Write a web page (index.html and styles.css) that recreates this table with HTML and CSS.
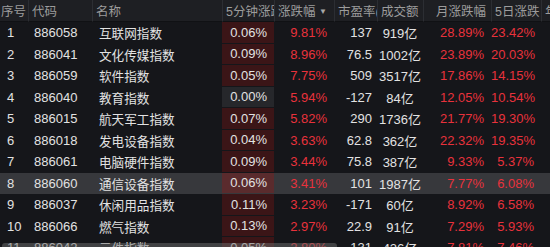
FILE: index.html
```html
<!DOCTYPE html>
<html>
<head>
<meta charset="utf-8">
<link rel="stylesheet" href="styles.css">
</head>
<body>
<div class="board">
<table class="quotes">
  <colgroup>
    <col class="c-no"><col class="c-code"><col class="c-name"><col class="c-min5">
    <col class="c-chg"><col class="c-pe"><col class="c-amt"><col class="c-month">
    <col class="c-day5"><col class="c-year">
  </colgroup>
  <thead>
    <tr>
      <th>序号</th><th>代码</th><th>名称</th><th>5分钟涨跌</th>
      <th>涨跌幅 <span class="sort">&#9660;</span></th><th>市盈率(</th><th>成交额</th>
      <th class="r">月涨跌幅</th><th>5日涨跌</th><th>年</th>
    </tr>
  </thead>
  <tbody id="rows"></tbody>
</table>
<div class="hscroll"></div>
</div>

<script type="text/javascript">
	const data = [
		["1", "886058", "互联网指数", "0.06%", "9.81%", "137", "919亿", "28.89%", "23.42%"],
		["2", "886041", "文化传媒指数", "0.09%", "8.96%", "76.5", "1002亿", "23.89%", "20.03%"],
		["3", "886059", "软件指数", "0.05%", "7.75%", "509", "3517亿", "17.86%", "14.15%"],
		["4", "886040", "教育指数", "0.00%", "5.94%", "-127", "84亿", "12.05%", "10.54%"],
		["5", "886015", "航天军工指数", "0.07%", "5.82%", "290", "1736亿", "21.77%", "19.30%"],
		["6", "886018", "发电设备指数", "0.04%", "3.63%", "62.8", "362亿", "22.32%", "19.35%"],
		["7", "886061", "电脑硬件指数", "0.09%", "3.44%", "75.8", "387亿", "9.33%", "5.37%"],
		["8", "886060", "通信设备指数", "0.06%", "3.41%", "101", "1987亿", "7.77%", "6.08%"],
		["9", "886037", "休闲用品指数", "0.11%", "3.23%", "-171", "60亿", "8.92%", "6.58%"],
		["10", "886066", "燃气指数", "0.13%", "2.97%", "22.9", "91亿", "7.29%", "5.93%"],
		["11", "886042", "元件指数", "0.05%", "2.80%", "131", "426亿", "7.81%", "7.46%"]
	]

	function cell(row, text, cls) {
		const td = row.insertCell()
		td.textContent = text
		if (cls) td.className = cls
		return td
	}

	const tbody = document.getElementById("rows")
	for (const d of data) {
		const row = tbody.insertRow()
		if (d[0] == "8") row.classList.add("selected")

		cell(row, d[0], "no")
		cell(row, d[1], "code")
		cell(row, d[2], "name")
		// flat 5-min change gets a grey cell instead of red
		cell(row, d[3], d[3] == "0.00%" ? "min5 flat" : "min5")
		cell(row, d[4], "num up")
		cell(row, d[5], "num pe")
		cell(row, d[6], "amt")
		cell(row, d[7], "num up")
		cell(row, d[8], "num up")
		cell(row, "", "")
	}
</script>
</body>
</html>
```

FILE: styles.css
```css
html, body {
	margin: 0;
	background: #15161a;
	overflow: hidden;
}

body {
	font-family: "Liberation Sans", "Noto Sans CJK SC", sans-serif;
	font-size: 13px;
	color: #e2e2e2;
}

.board {
	position: relative;
	width: 550px;
	height: 247px;
	overflow: hidden;
}

.quotes {
	table-layout: fixed;
	border-collapse: separate;
	border-spacing: 0;
	width: 580px;
}

.c-no { width: 28px; }
.c-code { width: 64px; }
.c-name { width: 130px; }
.c-min5 { width: 52px; }
.c-chg { width: 60px; }
.c-pe { width: 43px; }
.c-amt { width: 46px; }
.c-month { width: 68px; }
.c-day5 { width: 50px; }
.c-year { width: 39px; }

.quotes th {
	height: 22px;
	padding: 0 0 1px 3px;
	background: #1e1f23;
	color: #9c9c9c;
	font-size: 12.5px;
	font-weight: normal;
	text-align: left;
	white-space: nowrap;
	overflow: hidden;
	border-left: 1px solid #2c2e33;
	border-bottom: 1px solid #101114;
	box-sizing: border-box;
}

.quotes th:first-child {
	border-left: none;
	padding-left: 1px;
}

.quotes th.r {
	text-align: right;
	padding-right: 5px;
}

.sort {
	font-size: 8px;
	vertical-align: 2px;
	color: #a8a8a8;
}

.quotes td {
	height: 20.5px;
	padding: 0;
	white-space: nowrap;
	overflow: hidden;
}

.quotes tr.selected {
	background: #37383c;
}

td.no { padding-left: 7px; }
td.code { padding-left: 6px; }
td.name { padding-left: 7px; font-size: 12.6px; }

td.min5 {
	text-align: right;
	padding-right: 7px;
	background: #3b1517;
	background-clip: padding-box;
	border-bottom: 1px solid transparent;
}

td.min5.flat { background: #26272b; background-clip: padding-box; }
tr.selected td.min5 { background: #5a2b2d; background-clip: padding-box; }

td.num {
	text-align: right;
	padding-right: 7px;
}

td.pe { padding-right: 5px; }

td.up { color: #e8323c; }

td.amt { text-align: center; }

.hscroll {
	position: absolute;
	left: 2px;
	top: 243px;
	width: 335px;
	height: 6px;
	border-radius: 3px;
	background: rgba(110, 110, 110, 0.5);
}
```
